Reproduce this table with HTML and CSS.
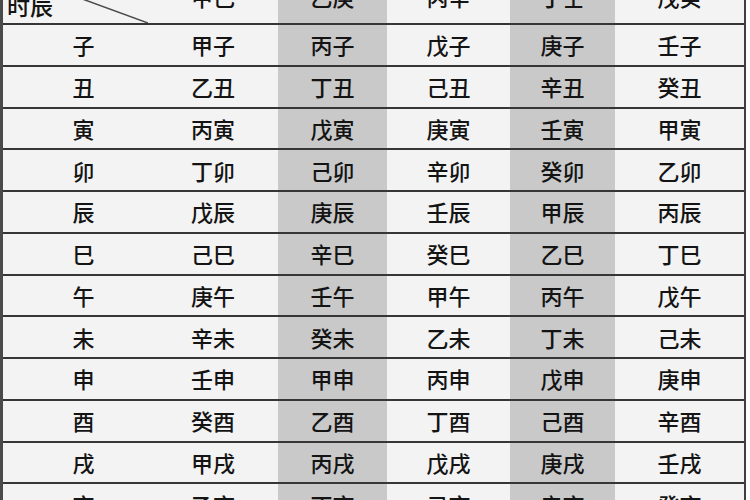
FILE: index.html
```html
<!DOCTYPE html>
<html lang="zh">
<head>
<meta charset="utf-8">
<title>五鼠遁</title>
<link rel="stylesheet" href="styles.css">
</head>
<body>
<div class="sheet">
  <div class="cell head corner">
    <svg class="diag" viewBox="0 0 145 53" preserveAspectRatio="none"><line x1="0" y1="0" x2="145" y2="53"/></svg>
    <span class="corner-label">时辰</span>
  </div>
  <div class="cell head">甲己</div>
  <div class="cell head sh">乙庚</div>
  <div class="cell head">丙辛</div>
  <div class="cell head sh">丁壬</div>
  <div class="cell head">戊癸</div>

  <div class="cell first">子</div><div class="cell">甲子</div><div class="cell sh">丙子</div><div class="cell">戊子</div><div class="cell sh">庚子</div><div class="cell">壬子</div>
  <div class="cell first">丑</div><div class="cell">乙丑</div><div class="cell sh">丁丑</div><div class="cell">己丑</div><div class="cell sh">辛丑</div><div class="cell">癸丑</div>
  <div class="cell first">寅</div><div class="cell">丙寅</div><div class="cell sh">戊寅</div><div class="cell">庚寅</div><div class="cell sh">壬寅</div><div class="cell">甲寅</div>
  <div class="cell first">卯</div><div class="cell">丁卯</div><div class="cell sh">己卯</div><div class="cell">辛卯</div><div class="cell sh">癸卯</div><div class="cell">乙卯</div>
  <div class="cell first">辰</div><div class="cell">戊辰</div><div class="cell sh">庚辰</div><div class="cell">壬辰</div><div class="cell sh">甲辰</div><div class="cell">丙辰</div>
  <div class="cell first">巳</div><div class="cell">己巳</div><div class="cell sh">辛巳</div><div class="cell">癸巳</div><div class="cell sh">乙巳</div><div class="cell">丁巳</div>
  <div class="cell first">午</div><div class="cell">庚午</div><div class="cell sh">壬午</div><div class="cell">甲午</div><div class="cell sh">丙午</div><div class="cell">戊午</div>
  <div class="cell first">未</div><div class="cell">辛未</div><div class="cell sh">癸未</div><div class="cell">乙未</div><div class="cell sh">丁未</div><div class="cell">己未</div>
  <div class="cell first">申</div><div class="cell">壬申</div><div class="cell sh">甲申</div><div class="cell">丙申</div><div class="cell sh">戊申</div><div class="cell">庚申</div>
  <div class="cell first">酉</div><div class="cell">癸酉</div><div class="cell sh">乙酉</div><div class="cell">丁酉</div><div class="cell sh">己酉</div><div class="cell">辛酉</div>
  <div class="cell first">戌</div><div class="cell">甲戌</div><div class="cell sh">丙戌</div><div class="cell">戊戌</div><div class="cell sh">庚戌</div><div class="cell">壬戌</div>
  <div class="cell first">亥</div><div class="cell">乙亥</div><div class="cell sh">丁亥</div><div class="cell">己亥</div><div class="cell sh">辛亥</div><div class="cell">癸亥</div>
</div>
</body>
</html>
```

FILE: styles.css
```css
html, body {
  margin: 0;
  padding: 0;
  background: #ffffff;
  overflow: hidden;
}

.sheet {
  width: 741px;
  margin-top: -30px;
  display: grid;
  grid-template-columns: 145px 130px 109px 123px 105px 129px;
  grid-template-rows: 55px repeat(12, 41.75px);
  background: #f3f3f3;
  border-left: 3px solid #4a4a4a;
  border-right: 2px solid #3f3f3f;
  font-family: "Noto Sans CJK SC", "Noto Sans", sans-serif;
  font-size: 22px;
  font-weight: 500;
  color: #141414;
}

.cell {
  box-sizing: border-box;
  border-bottom: 2px solid #363636;
  display: flex;
  align-items: center;
  justify-content: center;
  line-height: 1;
  padding-bottom: 1px;
}

.sh {
  background: #c9c9c9;
}

.first {
  padding-left: 16px;
}

.corner {
  position: relative;
  justify-content: flex-start;
  align-items: flex-end;
  padding-left: 4px;
  padding-bottom: 6px;
}

.corner-label {
  font-size: 23px;
}

.diag {
  position: absolute;
  left: 0;
  top: 0;
  width: 100%;
  height: 100%;
}

.diag line {
  stroke: #4a4a4a;
  stroke-width: 1.5;
}
```
